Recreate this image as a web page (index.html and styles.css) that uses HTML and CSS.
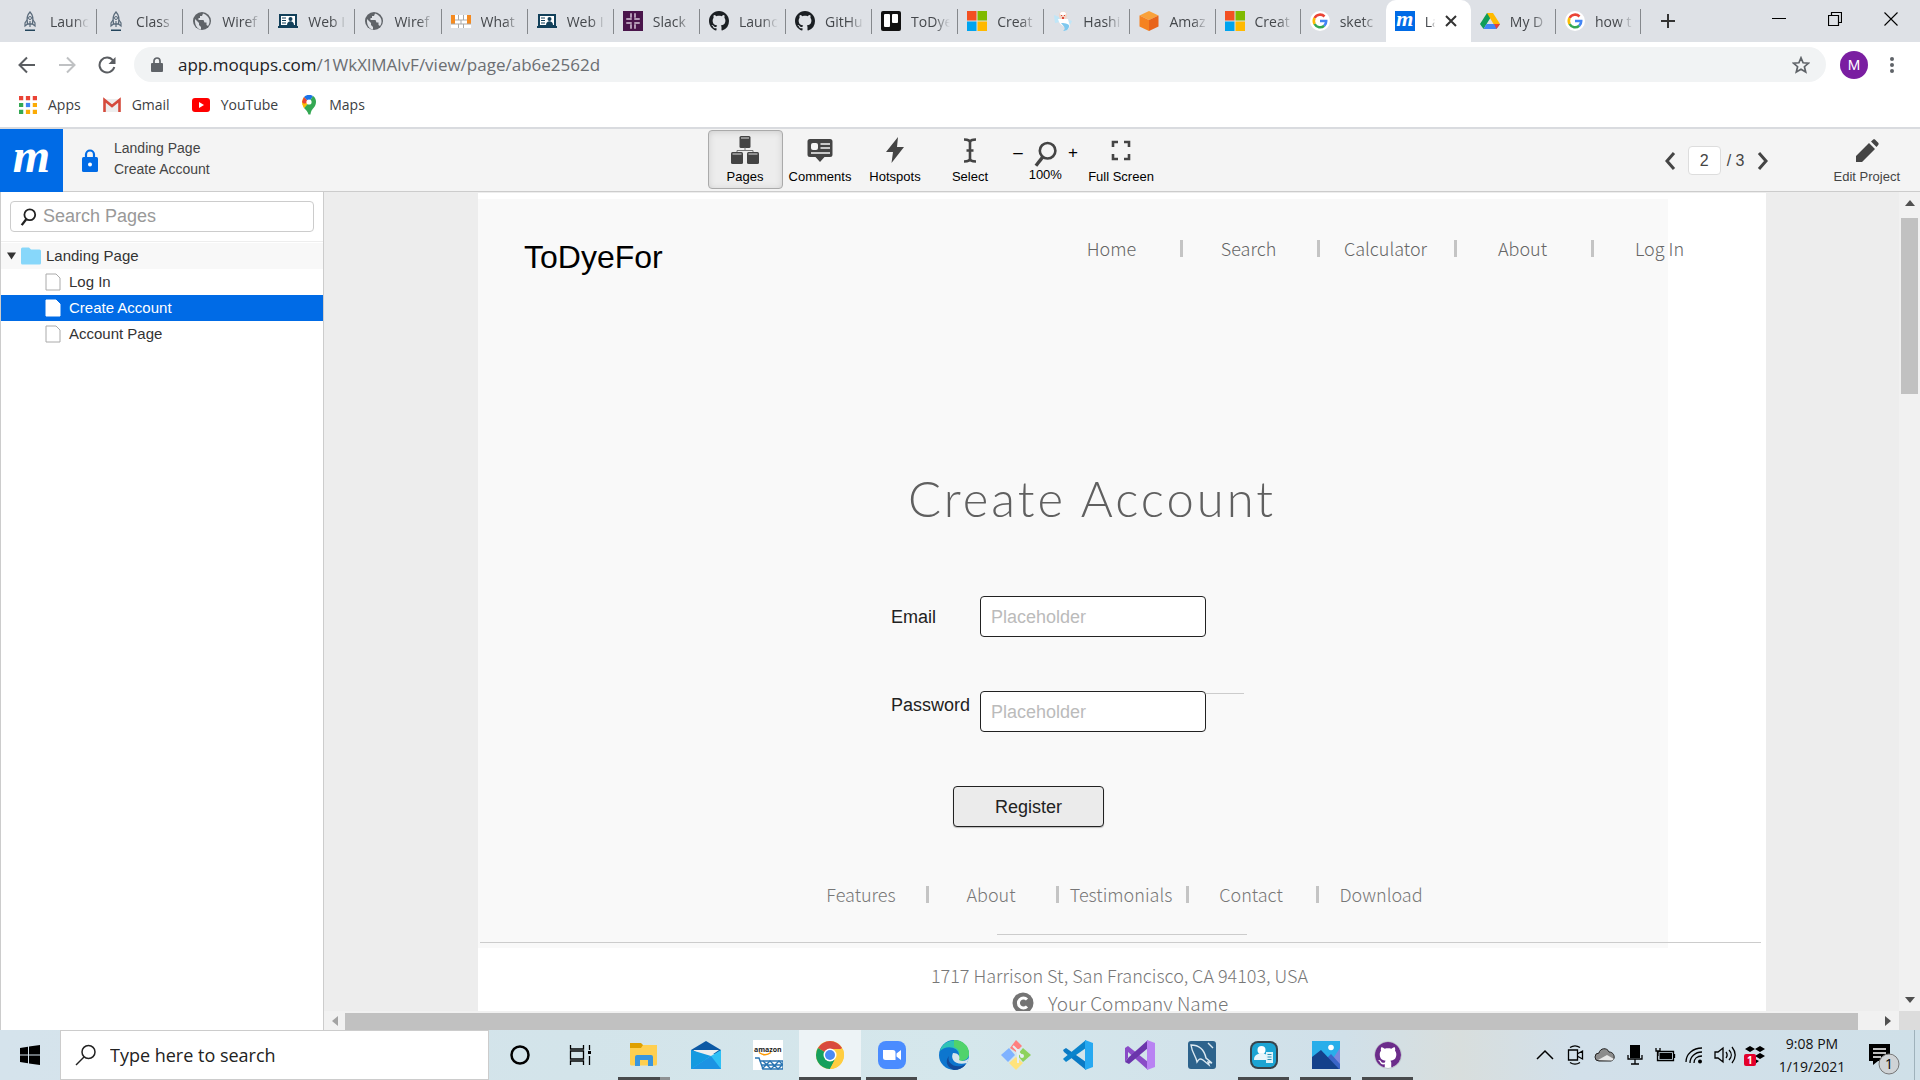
FILE: index.html
```html
<!DOCTYPE html>
<html lang="en">
<head>
<meta charset="utf-8">
<title>Landing Page - Create Account</title>
<link rel="stylesheet" href="styles.css">
</head>
<body>
<svg class="defs" aria-hidden="true">
  <symbol id="rocket" viewBox="0 0 20 20"><path d="M10 1c3 3 3.500 7 2.500 12h-5C6.500 8 7 4 10 1z" fill="none" stroke="#5a6b7b" stroke-width="1.300"/><circle cx="10" cy="7" r="1.500" fill="none" stroke="#5a6b7b"/><path d="M7 9l-2 3v3l2.500-2M13 9l2 3v3l-2.500-2M10 10v6" fill="none" stroke="#5a6b7b" stroke-width="1.200"/><path d="M5 18.500h10v1.500H5z" fill="#23455c"/></symbol>
  <symbol id="globe" viewBox="0 0 20 20"><circle cx="10" cy="10" r="9" fill="#5f6368"/><path d="M3 8l4 4v2l2 2v2.500C5 18 2.500 14 3 8zM11 2.500L10 5H8v2H6.500v2h5l1 2.500h2V14l1.500 1c3-4 2-10-5-12.500z" fill="#dee1e6"/></symbol>
  <symbol id="board" viewBox="0 0 20 20"><path d="M2 4h16v11H2z" fill="#fff" stroke="#12405a" stroke-width="2"/><path d="M0 15h20v2H0z" fill="#12405a"/><path d="M4 7h4M4 9.500h4M4 12h4" stroke="#12405a" stroke-width="1.200"/><circle cx="12.500" cy="8" r="2" fill="#12405a"/><path d="M9 14c0-5 7-5 7 0z" fill="#12405a"/></symbol>
  <symbol id="blocks" viewBox="0 0 20 20"><path d="M0 4h20v10H0z" fill="#f58a1f"/><path d="M4 4h12v9H4z" fill="#fff"/><path d="M0 13h20v4H0z" fill="#fff"/><path d="M7.500 4v5M12.500 4v5M4 9h12M10 9v4M0 13h20M7.500 13v4M12.500 13v4" stroke="#a9a9a9"/></symbol>
  <symbol id="slack" viewBox="0 0 20 20"><path d="M0 0h20v20H0z" fill="#4a154b"/><path d="M8 3v5H3M12 3v5h5M8 17v-5H3M12 17v-5h5" fill="none" stroke="#b49ab5" stroke-width="2" stroke-linecap="round" stroke-dasharray="3 2 4"/></symbol>
  <symbol id="github" viewBox="0 0 16 16"><path fill="currentColor" d="M8 0C3.580 0 0 3.580 0 8c0 3.540 2.290 6.530 5.470 7.590.4.070.55-.17.55-.38 0-.19-.01-.82-.01-1.490-2.010.37-2.530-.49-2.690-.94-.09-.23-.48-.94-.82-1.130-.28-.15-.68-.52-.01-.53.63-.01 1.080.58 1.230.82.720 1.210 1.870.87 2.330.66.070-.52.28-.87.51-1.070-1.780-.2-3.640-.89-3.640-3.950 0-.87.310-1.590.82-2.150-.08-.2-.36-1.020.080-2.120 0 0 .67-.21 2.200.82.640-.18 1.320-.27 2-.27s1.360.090 2 .27c1.530-1.040 2.200-.82 2.200-.82.440 1.100.160 1.920.080 2.120.510.560.82 1.270.82 2.150 0 3.070-1.870 3.750-3.650 3.950.29.25.54.73.54 1.480 0 1.070-.01 1.930-.01 2.200 0 .21.150.46.550.38A8.010 8.010 0 0 0 16 8c0-4.420-3.580-8-8-8z"/></symbol>
  <symbol id="trello" viewBox="0 0 20 20"><rect width="20" height="20" rx="2" fill="#111"/><rect x="3" y="3" width="6" height="13" rx="1" fill="#fff"/><rect x="11" y="3" width="6" height="9" rx="1" fill="#fff"/></symbol>
  <symbol id="ms" viewBox="0 0 20 20"><path d="M0 0h9.500v9.500H0z" fill="#f25022"/><path d="M10.500 0H20v9.500h-9.500z" fill="#7fba00"/><path d="M0 10.500h9.500V20H0z" fill="#00a4ef"/><path d="M10.500 10.500H20V20h-9.500z" fill="#ffb900"/></symbol>
  <symbol id="genie" viewBox="0 0 20 20"><path d="M1 4l5 2 1 5-5 1zM14 8l5 2-2 4z" fill="#bfe6f8"/><circle cx="10" cy="4.500" r="4" fill="#f3d3c4"/><path d="M7 3c0-3 6-3 6 0l-1 1H8z" fill="#fff"/><path d="M8 4h1v1H8zM11 4h1v1h-1zM9 6h2v2H9z" fill="#e04a3a"/><path d="M5 8h10l1 4c2 4-1 8-5 8 3-3 1-4-1-5s-4-3-5-7z" fill="#fff"/><path d="M8 12c5 0 9 1 8 4s-3 4-6 4c4-3 0-5-2-8z" fill="#7ec8ee"/></symbol>
  <symbol id="cube" viewBox="0 0 20 20"><path d="M10 0l9.500 4.500L10 9 .5 4.500z" fill="#f9a13a"/><path d="M.5 4.500L10 9v11L.5 15.500z" fill="#f58220"/><path d="M19.500 4.500L10 9v11l9.500-4.500z" fill="#e8641b"/></symbol>
  <symbol id="google" viewBox="0 0 20 20"><circle cx="10" cy="10" r="10" fill="#fff"/><g fill="none" stroke-width="2.600"><path d="M14.500 5.500A6.200 6.200 0 0 0 4.600 7" stroke="#ea4335"/><path d="M4.600 7a6.200 6.200 0 0 0 0 6" stroke="#fbbc05"/><path d="M4.600 13a6.200 6.200 0 0 0 9.600 1.700" stroke="#34a853"/><path d="M14.200 14.700A6 6 0 0 0 16.200 10H10" stroke="#4285f4"/></g></symbol>
  <symbol id="drive" viewBox="0 0 20 20"><path d="M7 2h6l-3 5.500L3.500 18 0 13z" fill="#0f9d58"/><path d="M7 2h6l7 11h-6.500z" fill="#ffba00"/><path d="M6.500 13H20l-3.500 5h-13z" fill="#4285f4"/><path d="M14 13h6l-3.500 5z" fill="#ea4335"/></symbol>
  <symbol id="loupe" viewBox="0 0 20 20"><circle cx="12" cy="7.500" r="6" fill="none" stroke="currentColor" stroke-width="2"/><path d="M8.500 12L3 19" stroke="currentColor" stroke-width="2.600" fill="none"/></symbol>
  <symbol id="file" viewBox="0 0 16 18"><path d="M1 1h10l4 4v12H1z" fill="#fff" stroke="currentColor"/></symbol>
  <symbol id="chevron" viewBox="0 0 12 18"><path d="M10 1L3 9l7 8" fill="none" stroke="#444" stroke-width="3"/></symbol>
</svg>

<div class="tabstrip">
  <nav class="tabs" aria-label="Open tabs">
    <button class="tab"><svg><use href="#rocket"/></svg><span>Launc</span></button>
    <button class="tab"><svg><use href="#rocket"/></svg><span>Class</span></button>
    <button class="tab"><svg><use href="#globe"/></svg><span>Wiref</span></button>
    <button class="tab"><svg><use href="#board"/></svg><span>Web I</span></button>
    <button class="tab"><svg><use href="#globe"/></svg><span>Wiref</span></button>
    <button class="tab"><svg><use href="#blocks"/></svg><span>What</span></button>
    <button class="tab"><svg><use href="#board"/></svg><span>Web I</span></button>
    <button class="tab"><svg><use href="#slack"/></svg><span>Slack</span></button>
    <button class="tab"><svg class="ink"><use href="#github"/></svg><span>Launc</span></button>
    <button class="tab"><svg class="ink"><use href="#github"/></svg><span>GitHu</span></button>
    <button class="tab"><svg><use href="#trello"/></svg><span>ToDye</span></button>
    <button class="tab"><svg><use href="#ms"/></svg><span>Creat</span></button>
    <button class="tab"><svg><use href="#genie"/></svg><span>Hashi</span></button>
    <button class="tab"><svg><use href="#cube"/></svg><span>Amaz</span></button>
    <button class="tab"><svg><use href="#ms"/></svg><span>Creat</span></button>
    <button class="tab last-before"><svg><use href="#google"/></svg><span>sketc</span></button>
    <button class="tab active"><i class="m-icon">m</i><span>La</span><svg class="close" viewBox="0 0 12 12"><path d="M1 1l10 10M11 1L1 11" stroke="#333" stroke-width="2"/></svg></button>
    <button class="tab"><svg><use href="#drive"/></svg><span>My D</span></button>
    <button class="tab"><svg><use href="#google"/></svg><span>how t</span></button>
  </nav>
  <button class="new-tab" aria-label="New tab"><svg viewBox="0 0 16 16"><path d="M8 1v14M1 8h14" stroke="#333" stroke-width="2"/></svg></button>
  <div class="window-controls">
    <button aria-label="Minimize"><svg viewBox="0 0 14 14"><path d="M0 6.500h14" stroke="#000"/></svg></button>
    <button aria-label="Restore"><svg viewBox="0 0 14 14"><path d="M.5 3.500h10v10H.5zM3.500 3V.5h10v10H11" fill="none" stroke="#000" stroke-width="1.200"/></svg></button>
    <button aria-label="Close"><svg viewBox="0 0 14 14"><path d="M.5.5l13 13M13.500.5l-13 13" stroke="#000" stroke-width="1.100"/></svg></button>
  </div>
</div>

<div class="toolbar">
  <button aria-label="Back"><svg viewBox="0 0 18 18"><path d="M17 9H2M9 1.500L1.500 9 9 16.500" fill="none" stroke="#5a5d61" stroke-width="2"/></svg></button>
  <button aria-label="Forward"><svg viewBox="0 0 18 18"><path d="M1 9h15M9 1.500L16.500 9 9 16.500" fill="none" stroke="#bfc1c3" stroke-width="2"/></svg></button>
  <button aria-label="Reload"><svg viewBox="0 0 18 18"><path d="M15 4.500A7.500 7.500 0 1 0 16.300 11" fill="none" stroke="#5a5d61" stroke-width="2"/><path d="M17.500 1v7h-7z" fill="#5a5d61"/></svg></button>
  <div class="address">
    <svg class="lock" viewBox="0 0 12 15"><path d="M1 6h10a1 1 0 0 1 1 1v7a1 1 0 0 1-1 1H1a1 1 0 0 1-1-1V7a1 1 0 0 1 1-1z" fill="#5f6368"/><path d="M3 7V4a3 3 0 0 1 6 0v3" fill="none" stroke="#5f6368" stroke-width="1.700"/></svg>
    <a href="#" class="url">app.moqups.com<span>/1WkXlMAlvF/view/page/ab6e2562d</span></a>
    <svg class="star" viewBox="0 0 18 18"><path d="M9 1.800l2.100 5 5.400.4-4.100 3.500 1.300 5.300L9 13.200 4.300 16l1.300-5.300-4.100-3.500 5.400-.4z" fill="none" stroke="#5f6368" stroke-width="1.700"/></svg>
  </div>
  <span class="avatar">M</span>
  <button class="more" aria-label="More"><svg viewBox="0 0 4 16"><circle cx="2" cy="2" r="2"/><circle cx="2" cy="8" r="2"/><circle cx="2" cy="14" r="2"/></svg></button>
</div>

<nav class="bookmarks" aria-label="Bookmarks">
  <a href="#"><svg viewBox="0 0 17 17"><path d="M0 0h4v4H0zM6.500 0h4v4h-4zM13 0h4v4h-4z" fill="#ea4335"/><path d="M0 6.500h4v4H0zM0 13h4v4H0z" fill="#34a853"/><path d="M6.500 6.500h4v4h-4z" fill="#4285f4"/><path d="M13 6.500h4v4h-4zM6.500 13h4v4h-4zM13 13h4v4h-4z" fill="#fbab05"/></svg>Apps</a>
  <a href="#"><svg viewBox="0 0 18 18"><path d="M1 3h16v13H1z" fill="#eee"/><path d="M1.500 16V4L9 10l7.500-6v12" fill="none" stroke="#d54b3d" stroke-width="2.600"/></svg>Gmail</a>
  <a href="#"><svg viewBox="0 0 18 18"><rect y="2" width="18" height="14" rx="3" fill="#f00"/><path d="M7 6l5 3-5 3z" fill="#fff"/></svg>YouTube</a>
  <a href="#"><svg viewBox="0 0 18 20"><path d="M2 7a7 7 0 0 1 2-5l5 5-5 6C3 11 2 9.500 2 7z" fill="#fbbc04"/><path d="M4 2l-2 5 3 3 4-3z" fill="#ea4335"/><path d="M4 2a7 7 0 0 1 9-1L9 7z" fill="#1a73e8"/><path d="M13 1c3 2 4 6 2 10-2 3-4 4-4.500 8.500h-2C8 17 6 15 4 13l5-6z" fill="#34a853"/><path d="M4 13L2.500 9 9 7.500z" fill="#fbbc04"/><circle cx="9" cy="7" r="2.600" fill="#fff"/></svg>Maps</a>
</nav>

<header class="app-header">
  <div class="project">
    <a href="#" class="brand m-icon">m</a>
    <svg class="project-lock" viewBox="0 0 16 24"><rect y="8" width="16" height="15" rx="1.500" fill="#006be6"/><path d="M4 9V5.500a4 4 0 0 1 8 0V9" fill="none" stroke="#006be6" stroke-width="2.200"/><circle cx="8" cy="15.500" r="2" fill="#fff"/></svg>
    <div class="project-name"><span>Landing Page</span><span>Create Account</span></div>
  </div>
  <div class="tools">
    <button class="tool on"><svg viewBox="0 0 28 28"><g fill="#444"><rect x="8.500" y="0" width="11" height="12" rx="1.500"/><rect x="0" y="16" width="12" height="12" rx="1.500"/><rect x="16" y="16" width="12" height="12" rx="1.500"/></g><path d="M14 11.500v3M6 16v-1.500h16V16" fill="none" stroke="#777"/><path d="M10 2h8M1.500 18h9M17.500 18h9" stroke="#ddd"/></svg>Pages</button>
    <button class="tool"><svg viewBox="0 0 28 28"><path d="M4 3h20a2.500 2.500 0 0 1 2.500 2.500v13A2.500 2.500 0 0 1 24 21h-5.500L14 26l-4.500-5H4a2.500 2.500 0 0 1-2.500-2.500v-13A2.500 2.500 0 0 1 4 3z" fill="#444"/><rect x="5" y="7" width="7" height="7" rx="2" fill="#f4f4f4"/><path d="M14.500 8H24M14.500 12H24M5 17h19" stroke="#f4f4f4" stroke-width="1.500"/></svg>Comments</button>
    <button class="tool"><svg viewBox="0 0 28 28"><path d="M17 1L5 16h7l-1.500 11L23 11h-7z" fill="#444"/></svg>Hotspots</button>
    <button class="tool"><svg viewBox="0 0 28 28"><path d="M8 3.500c4 0 6 1 6 3 0-2 2-3 6-3M8 25.500c4 0 6-1 6-3 0 2 2 3 6 3M14 6v17M10.500 14.500h7" fill="none" stroke="#444" stroke-width="2.600"/></svg>Select</button>
    <div class="zoom">
      <button aria-label="Zoom out">–</button>
      <button class="zoom-level"><svg><use href="#loupe"/></svg>100%</button>
      <button aria-label="Zoom in">+</button>
    </div>
    <button class="tool"><svg viewBox="0 0 28 28"><path d="M6 11V6h5M17 6h5v5M22 18v5h-5M11 23H6v-5" fill="none" stroke="#444" stroke-width="2.600"/></svg>Full Screen</button>
  </div>
  <div class="header-right">
    <div class="pager">
      <button aria-label="Previous page"><svg><use href="#chevron"/></svg></button>
      <input aria-label="Page" value="2">
      <span>/ 3</span>
      <button aria-label="Next page"><svg class="flip"><use href="#chevron"/></svg></button>
    </div>
    <button class="edit"><svg viewBox="0 0 24 24"><path d="M1 23v-6L14 4l6 6L7 23zM16 2.500L18 .8c.7-.6 1.500-.6 2.200 0l3 3c.6.700.6 1.500 0 2.200L21.500 8z" fill="#444"/></svg>Edit Project</button>
  </div>
</header>

<main class="workspace">
  <aside class="sidebar">
    <label class="page-search"><svg><use href="#loupe"/></svg><input type="text" placeholder="Search Pages" aria-label="Search Pages"></label>
    <nav class="tree" aria-label="Pages">
      <a href="#" class="folder"><svg class="caret" viewBox="0 0 10 8"><path d="M0 0h10L5 8z" fill="#333"/></svg><svg class="folder-icon" viewBox="0 0 20 18"><path d="M0 2a1.500 1.500 0 0 1 1.500-1.500H8L10 2.500h8.500A1.500 1.500 0 0 1 20 4v12a1.500 1.500 0 0 1-1.500 1.500h-17A1.500 1.500 0 0 1 0 16z" fill="#87d7fa"/></svg><span>Landing Page</span></a>
      <a href="#" class="leaf"><svg><use href="#file"/></svg><span>Log In</span></a>
      <a href="#" class="leaf selected"><svg><use href="#file"/></svg><span>Create Account</span></a>
      <a href="#" class="leaf"><svg><use href="#file"/></svg><span>Account Page</span></a>
    </nav>
  </aside>

  <section class="canvas">
    <div class="artboard">
      <div class="site-head">
        <div class="site-title">ToDyeFor</div>
        <nav class="menu" aria-label="Site"><a href="#">Home</a><a href="#">Search</a><a href="#">Calculator</a><a href="#">About</a><a href="#">Log In</a></nav>
      </div>
      <h1>Create Account</h1>
      <form class="signup">
        <label for="email">Email</label>
        <div class="field"><input id="email" type="text" placeholder="Placeholder"></div>
        <label for="password" class="raised">Password</label>
        <div class="field ruled"><input id="password" type="password" placeholder="Placeholder"></div>
        <button type="button">Register</button>
      </form>
      <nav class="menu foot-menu" aria-label="Footer"><a href="#">Features</a><a href="#">About</a><a href="#">Testimonials</a><a href="#">Contact</a><a href="#">Download</a></nav>
      <hr class="short-rule">
      <hr class="long-rule">
      <div class="address-line">1717 Harrison St, San Francisco, CA 94103, USA</div>
      <div class="company"><svg viewBox="0 0 22 22"><circle cx="11" cy="11" r="10.500" fill="#747474"/><path d="M15 7.500a5 5 0 1 0 0 7" fill="none" stroke="#fff" stroke-width="3"/></svg>Your Company Name</div>
    </div>
  </section>
  <div class="vscroll"><svg viewBox="0 0 10 6"><path d="M0 6l5-6 5 6z" fill="#505050"/></svg><div class="vtrack"><div class="vthumb"></div></div><svg viewBox="0 0 10 6"><path d="M0 0l5 6 5-6z" fill="#505050"/></svg></div>
  <div class="hscroll"><svg viewBox="0 0 6 10"><path d="M6 0L0 5l6 5z" fill="#a3a3a3"/></svg><div class="htrack"><div class="hthumb"></div></div><svg viewBox="0 0 6 10"><path d="M0 0l6 5-6 5z" fill="#505050"/></svg></div>
  <div class="corner"></div>
</main>

<footer class="taskbar">
  <button class="start" aria-label="Start"><svg viewBox="0 0 20 20"><path d="M0 3l8-1.200v7.700H0zM9 1.600L20 0v9.500H9zM0 10.500h8v7.700L0 17zM9 10.500h11V20L9 18.400z"/></svg></button>
  <label class="task-search"><svg viewBox="0 0 22 22"><circle cx="13.500" cy="8" r="6.500" fill="none" stroke="#222" stroke-width="1.500"/><path d="M9 13l-8 8" stroke="#222" stroke-width="1.500"/></svg><input type="text" placeholder="Type here to search" aria-label="Type here to search"></label>
  <div class="apps">
    <button aria-label="Cortana"><svg viewBox="0 0 30 30"><circle cx="15" cy="15" r="8.500" fill="none" stroke="#000" stroke-width="2.500"/></svg></button>
    <button aria-label="Task view"><svg viewBox="0 0 30 30"><path d="M3.500 5v4h13V5M3.500 25v-4h13v4M3.500 11h13v8h-13zM22.500 5v5M22.500 16v9" fill="none" stroke="#000" stroke-width="1.300"/><path d="M21 11h3v3h-3z"/></svg></button>
    <button class="running stacked" aria-label="File Explorer"><svg viewBox="0 0 30 30"><path d="M1 3h11l2 2v6H1z" fill="#dfa000"/><path d="M1 8h11l2-3h14v19a1.500 1.500 0 0 1-1.500 1.500h-24A1.500 1.500 0 0 1 1 24z" fill="#ffcf50"/><path d="M6 26V17a2 2 0 0 1 2-2h14a2 2 0 0 1 2 2v9h-5v-6h-8v6z" fill="#3a96dd"/></svg></button>
    <button aria-label="Mail"><svg viewBox="0 0 30 30"><path d="M0 10L15 1l15 9v4H0z" fill="#0c59a4"/><path d="M2 10h26L15 19z" fill="#eee"/><path d="M0 10l15 9L30 10v19H0z" fill="#2fc0f5"/><path d="M0 29L20 16 0 10z" fill="#159ae0"/><path d="M0 29l20-13 10 13z" fill="#1c93e3"/></svg></button>
    <button aria-label="Amazon"><svg viewBox="0 0 30 30"><path d="M0 0h30v30H0z" fill="#fff"/><text x="1" y="12" class="amazon-word">amazon</text><path d="M6 12.500c4 3 8 3 12 0" fill="none" stroke="#f90" stroke-width="1.500"/><path d="M2 18h4l4 11h20M7 21h23v8H10z" fill="none" stroke="#2874b2" stroke-width="1.400"/><path d="M8 25h22M9 29l8-8 8 8 5-5M10 21l8 8 8-8 4 4" stroke="#2874b2" stroke-width="1.400" fill="none"/></svg></button>
    <button class="running current" aria-label="Chrome"><svg viewBox="0 0 30 30"><circle cx="15" cy="15" r="14" fill="#ffcd40"/><path d="M15 15L2.900 8a14 14 0 0 1 24.200 0z" fill="#d94a3d"/><path d="M15 15L2.900 8a14 14 0 0 0 12 21l6-10.500z" fill="#16a05d"/><path d="M15 9h12.700a14 14 0 0 1-12.700 20l5-10z" fill="#ffcd40"/><circle cx="15" cy="15" r="6.500" fill="#fff"/><circle cx="15" cy="15" r="5" fill="#4a8af4"/></svg></button>
    <button class="running" aria-label="Zoom"><svg viewBox="0 0 30 30"><rect x="1" y="1" width="28" height="28" rx="8" fill="#4a8cff"/><path d="M6 10h10a2.500 2.500 0 0 1 2.500 2.500V20h-10A2.500 2.500 0 0 1 6 17.500zM19.500 13.500L24 10v10l-4.500-3.500z" fill="#fff"/></svg></button>
    <button aria-label="Edge"><svg viewBox="0 0 30 30"><circle cx="15" cy="15" r="15" fill="#0d76ce"/><path d="M1 11C4-2 25-4 30 12c1 6-3 9-9 9-3-1-2-3-1-5C21 7 7 4 1 11z" fill="#2fc3b5"/><path d="M15 0c9 0 15 6 15 13 0 5-4 8-9 8-3-1-2-3-1-5 1-5-1-8-5-9z" fill="#51d36b"/><path d="M10 16c-3 7 7 14 17 8-3 4-7 6-12 6-6-2-10-8-5-14z" fill="#124a9a"/><path d="M14 13c-3 6 2 13 14 10l2-5c-3 3-7 4-10 2 1-2 1-7-6-7z" fill="#d5e5ec"/></svg></button>
    <button aria-label="Git Bash"><svg viewBox="0 0 30 30"><path d="M15 0l6 6-6 6-6-4z" fill="#ff7f7f"/><path d="M8 8l6 7-7 7-7-7z" fill="#7fb2ff"/><path d="M22 8l8 7-8 7-6-7z" fill="#8ed25c"/><path d="M15 17l7 6-7 7-7-7z" fill="#ffe37c"/><path d="M12 6l5 5v12M17 12l4 4" fill="none" stroke="#e5eff3" stroke-width="2"/><circle cx="17" cy="11" r="2" fill="#e5eff3"/><circle cx="21" cy="16" r="2" fill="#e5eff3"/></svg></button>
    <button aria-label="VS Code"><svg viewBox="0 0 30 30"><path d="M0 10l3-2 20 14v8L1 12z" fill="#0a7ac4"/><path d="M0 19l3 3L23 8V0L1 18z" fill="#0b84cc"/><path d="M22 0l8 3v24l-8 3z" fill="#27a9f1"/></svg></button>
    <button aria-label="Visual Studio"><svg viewBox="0 0 30 30"><path d="M0 8l3-2 20 16v8L3 12v6l-3 4z" fill="#8a4bc7"/><path d="M0 22l4 2L23 8V0L4 17z" fill="#6b35ab"/><path d="M22 0l8 3v24l-8 3z" fill="#b982f3"/></svg></button>
    <button aria-label="MySQL Workbench"><svg viewBox="0 0 30 30"><rect x="1" y="1" width="28" height="28" rx="3" fill="#2d638c"/><path d="M4 5c8 0 13 4 15 13l6 5-4-1 1 3-6-5c-3-2-4-1-6 2-1-6-5-9-6-17zM21 3l5 5" fill="none" stroke="#dce9f1" stroke-width="1.400"/></svg></button>
    <button class="running" aria-label="Contacts"><svg viewBox="0 0 30 30"><rect x="1" y="1" width="28" height="28" rx="8" fill="#38444c"/><rect x="3" y="3" width="24" height="24" rx="6" fill="#1ca4d3"/><circle cx="12.500" cy="10" r="4" fill="#fff"/><path d="M5 20c0-6 4-5 5.500-7h4c2 2 5 1 5 7z" fill="#e9f6fb"/><path d="M17 12h7v11h-7z" fill="#dff3fa"/><path d="M18.500 14.500h4M18.500 17h4M18.500 19.500h4" stroke="#2e91b4"/></svg></button>
    <button class="running" aria-label="Photos"><svg viewBox="0 0 30 30"><path d="M1 1h28v28H1z" fill="#29aeea"/><path d="M29 8v21H15z" fill="#7a87dd"/><path d="M12 22l8-8 9 10v5H12z" fill="#3a65c8"/><path d="M1 17l9-7 18 19H1z" fill="#14418b"/><circle cx="20" cy="7.500" r="2.800" fill="#fff"/></svg></button>
    <button class="running desktop" aria-label="GitHub Desktop"><svg viewBox="0 0 30 30"><circle cx="15" cy="15" r="13.500" fill="#fff" stroke="#b9c3c9"/><use href="#github" x="2" y="2" width="26" height="26"/></svg></button>
  </div>
  <div class="tray">
    <svg viewBox="0 0 22 22"><path d="M3 15l8-8 8 8" fill="none" stroke="#000" stroke-width="1.500"/></svg>
    <svg viewBox="0 0 22 22"><path d="M4.500 6h9v10h-9zM14 9.500L18.500 7v8L14 12.500M6 3.500c3-2 7-2 10 0M6 18.500c3 2 7 2 10 0" fill="none" stroke="#000" stroke-width="1.300"/></svg>
    <svg viewBox="0 0 22 22"><path d="M5 17a4 4 0 0 1 0-8c1-5 8-6 10-1 6 0 7 8 2 9z" fill="#8c8c8c" stroke="#222"/><path d="M4 16l9-5 7 4-2 1.500z" fill="#e8e8e8"/></svg>
    <svg viewBox="0 0 22 22"><path d="M6 1h10v13H6z"/><path d="M4 11v4h14v-4M11 15v5M7 20h8" fill="none" stroke="#000" stroke-width="1.300"/></svg>
    <svg viewBox="0 0 22 22"><path d="M3.500 7.500h16v9h-16zM20.500 10v4M2 4v3h4V4M4 7v5" fill="none" stroke="#000" stroke-width="1.300"/><path d="M5.500 9h12.500v6H5.500z"/></svg>
    <svg viewBox="0 0 22 22"><path d="M2 18C2 10 9 4 18 4M6 19c0-6 5-11 12-11M10 19c0-4 3-7 8-7" fill="none" stroke="#000" stroke-width="1.300"/><circle cx="16" cy="17.500" r="2"/></svg>
    <svg viewBox="0 0 22 22"><path d="M1 8h3l5-4v14l-5-4H1zM12 8c1.500 2 1.500 4 0 6M15 6c3 3 3 7 0 10M18 3c4 5 4 11 0 16" fill="none" stroke="#000" stroke-width="1.300"/></svg>
    <svg viewBox="0 0 22 22"><path d="M6 2l5 3-5 3-5-3zM16 2l5 3-5 3-5-3zM16 9l5 3-5 3-5-3zM11 15l4 2-4 3z"/><rect y="10" width="12" height="12" rx="2" fill="#e3002b"/><text x="3" y="20" class="badge-number">1</text></svg>
  </div>
  <div class="clock"><span>9:08 PM</span><span>1/19/2021</span></div>
  <button class="notices" aria-label="Notifications"><svg viewBox="0 0 32 32"><path d="M1 1h21v17H10l-5 4v-4H1z"/><path d="M5 6h13M5 10h13M5 14h8" stroke="#fff" stroke-width="1.500"/><circle cx="21" cy="21" r="10" fill="#cfd3d6" stroke="#777"/><text x="17" y="26" class="notice-number">1</text></svg></button>
</footer>
</body>
</html>
```
FILE: styles.css
```css
* { box-sizing: border-box; }
body { margin: 0; height: 100vh; display: flex; flex-direction: column; overflow: hidden; font-family: "Liberation Sans", Arial, sans-serif; background: #fff; color: #333; }
button { border: 0; background: none; padding: 0; margin: 0; font: inherit; color: inherit; }
input { border: 0; background: none; padding: 0; margin: 0; font: inherit; color: inherit; min-width: 0; outline: 0; }
a { color: inherit; text-decoration: none; }
svg { display: block; flex: none; }
.defs { width: 0; height: 0; position: absolute; }

/* browser tabs */
.tabstrip { display: flex; align-items: center; height: 42px; flex: none; background: #dee1e6; padding-left: 11px; font: 14px "Open Sans", sans-serif; color: #45484c; }
.tabs { display: flex; flex: 0 1 1630px; align-self: stretch; min-width: 0; }
.tab { flex: 69 1 0; min-width: 0; display: flex; align-items: center; gap: 10px; padding: 0 8px 0 9px; position: relative; }
.tab:nth-child(n+14) { flex-grow: 68; }
.tab svg { width: 20px; height: 20px; }
.tab span { flex: 1; min-width: 0; overflow: hidden; white-space: nowrap; text-align: left; mask-image: linear-gradient(to right, #000 60%, transparent); }
.tab::after { content: ""; position: absolute; right: 0; top: 9px; bottom: 8px; width: 1px; background: #85888c; }
.tab.active { background: #fff; border-radius: 10px 10px 0 0; }
.tab.active::after, .last-before::after { display: none; }
.tab .close { width: 12px; height: 12px; margin-right: 6px; }
.ink { color: #1b1f23; }
.m-icon { background: #006be6; color: #fff; font: italic bold 22px/16px "Liberation Serif", serif; text-align: center; }
.tab .m-icon { width: 20px; height: 20px; flex: none; }
.new-tab { width: 54px; display: flex; justify-content: center; }
.new-tab svg { width: 16px; height: 16px; }
.window-controls { margin-left: auto; display: flex; gap: 42px; padding: 0 22px 4px 0; }
.window-controls svg { width: 14px; height: 14px; }

/* address row */
.toolbar { display: flex; align-items: center; height: 44px; flex: none; padding: 1px 21px 0 18px; gap: 22px; }
.toolbar button svg { width: 18px; height: 18px; }
.address { flex: 1; display: flex; align-items: center; height: 35px; border-radius: 18px; background: #f1f3f4; padding: 0 16px 0 17px; gap: 15px; margin: 0 -8px 0 -4px; }
.lock { width: 12px; height: 15px; }
.star { width: 18px; height: 18px; margin-left: auto; }
.url { font: 17px "Open Sans", sans-serif; color: #202124; }
.url span { color: #6b6e72; }
.avatar { width: 28px; height: 28px; border-radius: 50%; background: #7a1ea1; color: #fff; font-size: 15px; line-height: 28px; text-align: center; }
.toolbar .more { padding: 0 5px 0 0; }
.toolbar .more svg { width: 4px; height: 16px; fill: #5f6368; }
.bookmarks { display: flex; gap: 22px; height: 43px; flex: none; align-items: center; padding: 0 19px 4px; border-bottom: 2px solid #d9dbdf; font: 14px "Open Sans", sans-serif; color: #3c4043; }
.bookmarks a { display: flex; align-items: center; gap: 11px; }
.bookmarks svg { width: 18px; height: 20px; }

/* editor header */
.app-header { display: grid; grid-template-columns: minmax(0, 708fr) auto minmax(0, 762fr); height: 63px; flex: none; background: #f4f4f4; border-bottom: 1px solid #ccc; }
.project { display: flex; align-items: center; font-size: 14px; line-height: 21px; color: #444; }
.brand { width: 63px; height: 63px; align-self: flex-start; font-size: 48px; line-height: 53px; }
.project-lock { width: 16px; height: 24px; margin: 0 16px 0 19px; }
.project-name { display: flex; flex-direction: column; padding-bottom: 3px; }
.tools { display: flex; padding: 1px 0 3px; color: #000; font-size: 13px; line-height: 15px; }
.tool { width: 75px; display: flex; flex-direction: column; align-items: center; justify-content: flex-end; gap: 5px; padding-bottom: 4px; border: 1px solid transparent; border-radius: 4px; white-space: nowrap; }
.tool svg { width: 28px; height: 28px; }
.tool.on { background: #ededed; border-color: #aaa; box-shadow: inset 0 1px 6px #ccc; }
.zoom { display: flex; align-items: center; justify-content: center; width: 76px; gap: 6px; font-size: 17px; padding-bottom: 2px; }
.zoom > button:not(.zoom-level) { padding-bottom: 12px; }
.zoom-level { display: flex; flex-direction: column; align-items: center; font-size: 13px; padding-top: 5px; }
.zoom-level svg { width: 26px; height: 26px; color: #444; }
.header-right { display: flex; align-items: center; justify-content: flex-end; gap: 65px; padding-right: 20px; color: #444; }
.pager { display: flex; align-items: center; font-size: 17px; gap: 6px; }
.pager svg { width: 12px; height: 18px; }
.flip { transform: scaleX(-1); }
.pager input { width: 33px; height: 29px; border: 1px solid #ddd; border-radius: 4px; background: #fff; text-align: center; margin-left: 6px; font-size: 16px; }
.pager span { font-size: 16px; padding-right: 6px; }
.edit { display: flex; flex-direction: column; align-items: center; gap: 6px; font-size: 13px; line-height: 15px; padding-top: 2px; white-space: nowrap; }
.edit svg { width: 24px; height: 24px; }

/* workspace */
.workspace { flex: 1; min-height: 0; display: grid; grid-template-columns: 324px minmax(0, 1fr) 21px; grid-template-rows: minmax(0, 1fr) 19px; }
.sidebar { grid-row: 1 / 3; border: solid #ccc; border-width: 0 1px; font-size: 15px; }
.page-search { display: flex; align-items: center; gap: 6px; height: 31px; margin: 9px; border: 1px solid #ccc; border-radius: 4px; padding-left: 8px; font-size: 18px; }
.page-search svg { width: 18px; height: 20px; color: #222; }
.page-search input { flex: 1; }
.page-search input::placeholder { color: #999; opacity: 1; }
.tree { border-top: 1px solid #eee; padding-top: 1px; }
.tree a { display: flex; align-items: center; height: 26px; }
.tree span { padding-bottom: 2px; }
.folder { background: #f8f8f8; padding-left: 6px; }
.caret { width: 9px; height: 8px; margin-right: 5px; }
.folder-icon { width: 20px; height: 18px; margin-right: 5px; }
.leaf { padding-left: 44px; gap: 8px; }
.leaf svg { width: 16px; height: 18px; color: #aaa; }
.leaf.selected { background: #006be6; color: #fff; }
.leaf.selected svg { color: #fff; }
.canvas { background: #ededed; overflow: hidden; padding: 1px 0 0 154px; }

/* mockup page */
.artboard { width: 1288px; height: 100%; padding: 6px 0 0; overflow: hidden; background: linear-gradient(#f9f9f9, #f9f9f9) 0 6px / 1190px 749px no-repeat, #fff; }
.site-head { display: flex; justify-content: space-between; height: 100px; padding: 39px 38px 0 46px; }
.site-title { font-size: 32px; line-height: 38px; color: #000; }
.menu { display: flex; font-family: "Noto Sans CJK SC", "Noto Sans CJK JP", sans-serif; font-weight: 300; font-size: 18px; line-height: 20px; color: #666; }
.menu a { width: 137px; height: 20px; text-align: center; position: relative; white-space: nowrap; }
.menu a:not(:last-child)::after { content: ""; position: absolute; right: -3px; top: 2px; width: 3px; height: 17px; background: #c4c4c4; }
.artboard h1 { margin: 169px 0 0; padding-right: 60px; text-align: center; font: 300 49px/60px Lato, sans-serif; letter-spacing: 3px; color: #606060; }
.signup { display: grid; grid-template-columns: 89px 266px; row-gap: 54px; justify-content: start; align-items: center; margin: 68px 0 0 413px; font-size: 18px; line-height: 20px; color: #222; }
.signup .raised { padding-bottom: 14px; }
.field input { display: block; width: 226px; height: 41px; border: 1px solid #222; border-radius: 4px; background: #fff; padding: 1px 10px 0; flex: none; }
.field input::placeholder { color: #bbb; opacity: 1; }
.ruled { display: flex; }
.ruled::after { content: ""; flex: 1; height: 1px; background: #ccc; margin: 2px 2px 0 0; }
.signup button { grid-column: 1 / 3; width: 151px; height: 41px; margin-left: 62px; border: 1px solid #222; border-radius: 4px; background: #ebebeb; box-shadow: 0 1px 1px #bbb; }
.foot-menu { margin: 57px 0 0 318px; color: #777; }
.foot-menu a { width: 130px; }
.artboard hr { border: 0; height: 1px; background: #ccc; margin: 0; }
.artboard .short-rule { width: 250px; margin: 30px 0 7px 519px; }
.artboard .long-rule { margin: 0 5px 0 2px; }
.address-line, .company { font: 300 18px/28px "Noto Sans CJK SC", "Noto Sans CJK JP", sans-serif; color: #777; text-align: center; padding-right: 5px; }
.address-line { margin-top: 18px; }
.company { display: flex; justify-content: center; align-items: center; gap: 14px; padding-right: 4px; font-size: 19px; }
.company svg { width: 22px; height: 22px; }

/* scrollbars */
.vscroll, .hscroll { background: #f1f1f1; display: flex; align-items: center; }
.vscroll { flex-direction: column; padding: 8px 0; }
.vscroll svg { width: 10px; height: 6px; }
.vtrack { flex: 1; width: 17px; padding: 12px 0; }
.vthumb { height: 23%; background: #c1c1c1; }
.hscroll { padding: 0 8px; }
.hscroll svg { width: 6px; height: 10px; }
.htrack { flex: 1; height: 17px; padding: 0 27px 0 7px; margin-top: 2px; }
.hthumb { height: 17px; background: #c1c1c1; }
.corner { background: #dcdcdc; }

/* taskbar */
.taskbar { display: flex; height: 50px; flex: none; background: linear-gradient(90deg, #d5e3ec 0, #d3e4ea 30%, #d5e7ec 50%, #d0e0e9 70%, #d8dedd 76%, #d2e0ea 82%, #cfe0e8); padding-right: 5px; }
.taskbar button svg { width: 30px; height: 30px; }
.taskbar .start { width: 60px; display: flex; align-items: center; justify-content: center; }
.taskbar .start svg { width: 20px; height: 20px; }
.task-search { width: 429px; background: #fff; border: 1px solid #ccc; display: flex; align-items: center; gap: 13px; padding-left: 14px; font: 18px "Open Sans", sans-serif; }
.task-search svg { width: 22px; height: 22px; }
.task-search input { flex: 1; }
.task-search input::placeholder { color: #222; opacity: 1; }
.apps { display: flex; }
.apps button { width: 62px; display: flex; align-items: center; justify-content: center; position: relative; }
.running::after { content: ""; position: absolute; left: 5px; right: 6px; bottom: 0; height: 3px; background: #484a4c; }
.stacked::after { right: 5px; background: linear-gradient(90deg, #484a4c 80%, #8e9193 80%); }
.current { background: #edf3f6; }
.current::after { left: 0; right: 0; }
.desktop { color: #6b2c8a; }
.tray { display: flex; align-items: center; gap: 8px; margin-left: auto; }
.tray svg { width: 22px; height: 22px; }
.clock { width: 92px; display: flex; flex-direction: column; align-items: center; justify-content: center; font: 14px/23px "Open Sans", sans-serif; color: #111; }
.taskbar .notices { width: 57px; display: flex; align-items: center; justify-content: center; padding: 8px 4px 0 0; border-right: 1px solid #9fb2bb; }
.taskbar .notices svg { width: 32px; height: 32px; }
.amazon-word { font: bold 7px "Open Sans", sans-serif; fill: #222; }
.badge-number { font: bold 10px "Open Sans", sans-serif; fill: #fff; }
.notice-number { font: 14px "Open Sans", sans-serif; }
```
